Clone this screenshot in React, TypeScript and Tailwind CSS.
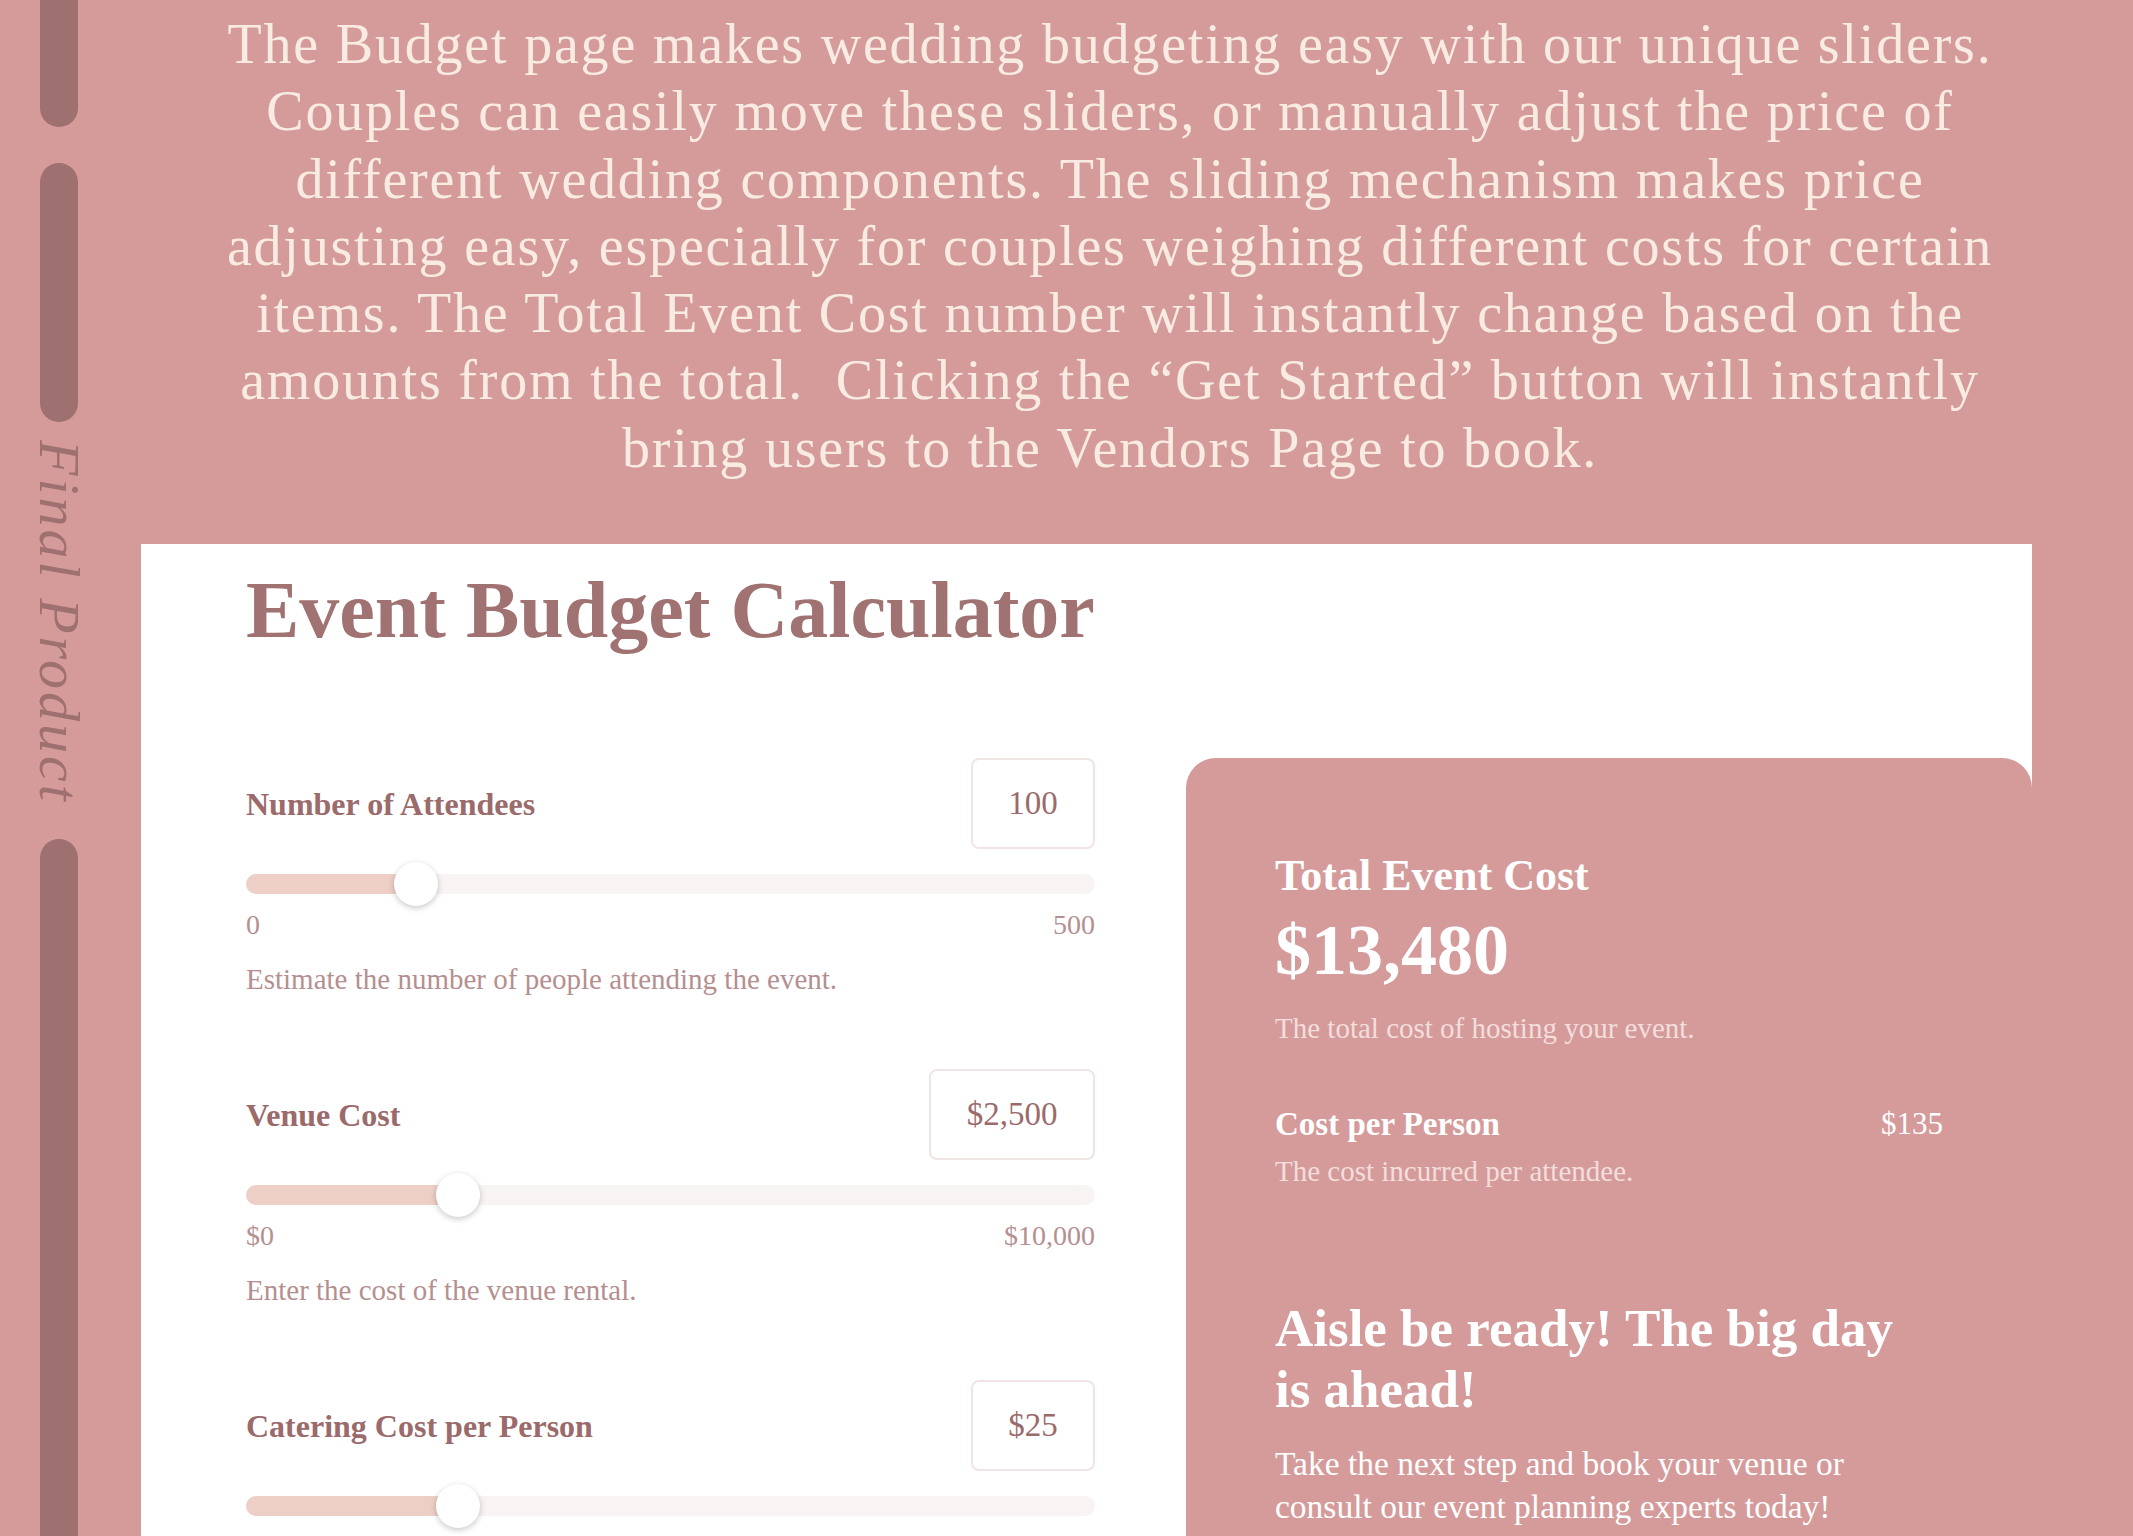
import React from 'react'

const serif = { fontFamily: '"Liberation Serif", "Times New Roman", serif' }

type SliderProps = {
  label: string
  value: string
  boxWidth: string
  fill: number
  min: string
  max: string
  help: string
}

function BudgetSlider({ label, value, boxWidth, fill, min, max, help }: SliderProps) {
  return (
    <div className="flex flex-col">
      <div className="flex items-center justify-between">
        <span className="text-[32px] font-bold text-[#9b6a6a] leading-none">{label}</span>
        <div
          className={`${boxWidth} h-[91px] flex items-center justify-center rounded-lg border-2 border-[#f0e4e4] bg-white text-[33px] text-[#9b6b6b]`}
        >
          {value}
        </div>
      </div>

      {/* track */}
      <div className="relative mt-[25px] h-[20px] rounded-full bg-[#f8f4f4]">
        <div className="h-full rounded-full bg-[#edcfc6]" style={{ width: `${fill * 100}%` }} />
        <div
          className="absolute top-1/2 h-[44px] w-[44px] -translate-x-1/2 -translate-y-1/2 rounded-full bg-white shadow-[0_2px_6px_rgba(0,0,0,0.22)]"
          style={{ left: `${fill * 100}%` }}
        />
      </div>

      <div className="mt-[15px] flex justify-between text-[28px] leading-[32px] text-[#b59090]">
        <span>{min}</span>
        <span>{max}</span>
      </div>
      <p className="mt-[21px] text-[29px] leading-[34px] text-[#b58f8f]">{help}</p>
    </div>
  )
}

const introLines = [
  'The Budget page makes wedding budgeting easy with our unique sliders.',
  'Couples can easily move these sliders, or manually adjust the price of',
  'different wedding components. The sliding mechanism makes price',
  'adjusting easy, especially for couples weighing different costs for certain',
  'items. The Total Event Cost number will instantly change based on the',
  'amounts from the total.\u00a0 Clicking the \u201cGet Started\u201d button will instantly',
  'bring users to the Vendors Page to book.',
]

export default function App() {
  return (
    <div className="flex h-[1536px] w-full overflow-hidden bg-[#d59b9b]" style={serif}>
      {/* Side rail */}
      <div className="w-[141px] shrink-0">
        <div className="flex h-full w-[118px] flex-col items-center">
          <div className="h-[127px] w-[38px] rounded-b-full bg-[#9e7070]" />
          <div className="mt-[36px] h-[259px] w-[38px] rounded-full bg-[#9e7070]" />
          <div
            className="mt-[18px] text-[58px] italic leading-none tracking-[3px] text-[#9e7070]"
            style={{ writingMode: 'vertical-rl' }}
          >
            Final Product
          </div>
          <div className="mt-[35px] w-[38px] flex-1 rounded-t-full bg-[#9e7070]" />
        </div>
      </div>

      {/* Main */}
      <div className="flex flex-1 flex-col">
        <div className="pr-[54px] pt-[11px] text-center text-[56px] leading-[67.3px] tracking-[1.8px] text-[#f7ebe2]">
          {introLines.map((line) => (
            <div key={line} className="whitespace-pre">
              {line}
            </div>
          ))}
        </div>

        <div className="mt-[62px] mr-[101px] flex-1 bg-white pl-[105px] pt-[26px]">
          <h1 className="text-[80px] font-bold leading-none text-[#a07272]">Event Budget Calculator</h1>

          <div className="mt-[108px] flex gap-[91px]">
            {/* Inputs */}
            <div className="flex w-[849px] shrink-0 flex-col gap-[73px]">
              <BudgetSlider
                label="Number of Attendees"
                value="100"
                boxWidth="w-[124px]"
                fill={0.2}
                min="0"
                max="500"
                help="Estimate the number of people attending the event."
              />
              <BudgetSlider
                label="Venue Cost"
                value="$2,500"
                boxWidth="w-[166px]"
                fill={0.25}
                min="$0"
                max="$10,000"
                help="Enter the cost of the venue rental."
              />
              <BudgetSlider
                label="Catering Cost per Person"
                value="$25"
                boxWidth="w-[124px]"
                fill={0.25}
                min="$0"
                max="$100"
                help="Enter the catering cost for each guest."
              />
            </div>

            {/* Summary card */}
            <div className="flex-1 rounded-t-[30px] bg-[#d59b9b] px-[89px] pt-[93px] pb-[80px] text-white">
              <h2 className="text-[44px] font-bold leading-[50px]">Total Event Cost</h2>
              <div className="mt-[9px] text-[72px] font-bold leading-[80px]">$13,480</div>
              <p className="mt-[21px] text-[29px] leading-[34px] text-[#f3dedb]">The total cost of hosting your event.</p>

              <div className="mt-[60px] flex items-center justify-between">
                <span className="text-[33px] font-bold leading-[38px]">Cost per Person</span>
                <span className="text-[31px] leading-[38px]">$135</span>
              </div>
              <p className="mt-[11px] text-[29px] leading-[34px] text-[#f3dedb]">The cost incurred per attendee.</p>

              <h3 className="mt-[110px] max-w-[640px] text-[53px] font-bold leading-[61px]">
                Aisle be ready! The big day is ahead!
              </h3>
              <p className="mt-[22px] max-w-[640px] text-[33.5px] leading-[43px]">
                Take the next step and book your venue or consult our event planning experts today!
              </p>
            </div>
          </div>
        </div>
      </div>
    </div>
  )
}
